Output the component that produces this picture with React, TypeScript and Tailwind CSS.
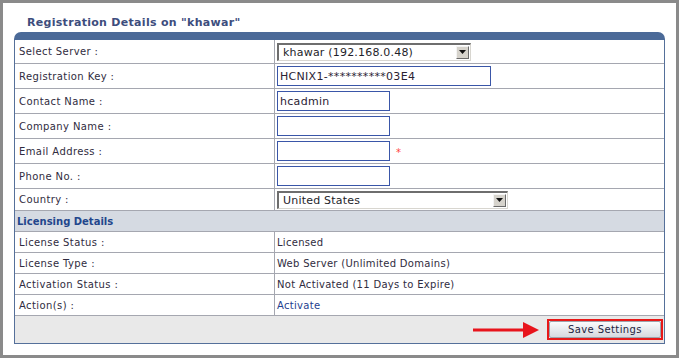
import React from "react";

const FONT = { fontFamily: '"DejaVu Sans", Verdana, sans-serif' };

type Row = { label: string; h: string; value: React.ReactNode };

function FakeSelect({ text, width }: { text: string; width: string }) {
  return (
    <div
      className={`flex h-[18px] items-center justify-between border-t-2 border-l-2 border-t-[#6e6e6e] border-l-[#6e6e6e] border-b border-r border-b-[#d8d6d0] border-r-[#d8d6d0] bg-white pl-[4px] pr-[1px] ${width}`}
    >
      <span className="text-[11px] leading-none tracking-[0.2px] text-[#1e1e2a]">{text}</span>
      <div className="flex h-[13px] w-[13px] items-center justify-center border border-t-[#f4f4f4] border-l-[#f4f4f4] border-b-[#6a6a6a] border-r-[#6a6a6a] bg-[#d6d3cc]">
        <svg width="7" height="4" viewBox="0 0 7 4">
          <path d="M0 0h7L3.5 4z" fill="#111" />
        </svg>
      </div>
    </div>
  );
}

function TextBox({ value, width }: { value?: string; width: string }) {
  return (
    <div className={`flex h-[20px] items-center border border-[#3a56a8] bg-white pl-[2px] ${width}`}>
      <span className="text-[11px] leading-none text-[#2a2233]">{value}</span>
    </div>
  );
}

const FORM_ROWS: Row[] = [
  { label: "Select Server :", h: "h-[24px]", value: <FakeSelect text="khawar (192.168.0.48)" width="w-[194px]" /> },
  { label: "Registration Key :", h: "h-[25px]", value: <TextBox value="HCNIX1-**********03E4" width="w-[214px]" /> },
  { label: "Contact Name :", h: "h-[25px]", value: <TextBox value="hcadmin" width="w-[113px]" /> },
  { label: "Company Name :", h: "h-[25px]", value: <TextBox width="w-[113px]" /> },
  {
    label: "Email Address :",
    h: "h-[25px]",
    value: (
      <div className="flex items-center">
        <TextBox width="w-[113px]" />
        <span className="ml-[6px] mt-[2px] text-[10px] text-[#ff4040]">*</span>
      </div>
    ),
  },
  { label: "Phone No. :", h: "h-[25px]", value: <TextBox width="w-[113px]" /> },
  { label: "Country :", h: "h-[22px]", value: <FakeSelect text="United States" width="w-[231px]" /> },
];

const LICENSE_ROWS: Row[] = [
  { label: "License Status :", h: "h-[21px]", value: "Licensed" },
  { label: "License Type :", h: "h-[21px]", value: "Web Server (Unlimited Domains)" },
  { label: "Activation Status :", h: "h-[21px]", value: "Not Activated (11 Days to Expire)" },
  { label: "Action(s) :", h: "h-[21px]", value: <span className="text-[#1f3f8f]">Activate</span> },
];

function TableRow({ row }: { row: Row }) {
  return (
    <div className={`flex border-b border-[#a5a7b0] ${row.h}`}>
      <div className="flex w-[260px] shrink-0 items-center border-r border-[#a5a7b0] pl-[4px] text-[10px] tracking-[0.4px] text-[#302c40]">
        {row.label}
      </div>
      <div className="flex items-center pl-[2px] text-[10px] tracking-[0.3px] text-[#302c40]">{row.value}</div>
    </div>
  );
}

export default function App() {
  return (
    <div className="h-[359px] w-[681px] bg-white" style={FONT}>
      <div className="h-[358px] w-[679px] border-[3px] border-[#8a8a8a] bg-white">
        {/* Title */}
        <div className="h-[29px] pl-[24px] pt-[13px] text-[11px] font-bold leading-[14px] tracking-[0.3px] text-[#3d4d7d]">
          Registration Details on "khawar"
        </div>

        {/* Panel */}
        <div className="ml-[11px] w-[651px]">
          <div className="h-[8px] rounded-t-[7px] bg-[#4b6a98]" />
          <div className="border-x border-b border-[#55709a]">
            {FORM_ROWS.map((r) => (
              <TableRow key={r.label} row={r} />
            ))}
            <div className="flex h-[21px] items-center border-b border-[#a5a7b0] bg-[#d5dae2] pl-[2px] text-[10px] font-bold text-[#22468c]">
              Licensing Details
            </div>
            {LICENSE_ROWS.map((r) => (
              <TableRow key={r.label} row={r} />
            ))}
            {/* Footer */}
            <div className="flex h-[27px] items-center justify-end bg-[#e9e9e9] pr-[1px]">
              <svg width="66" height="18" viewBox="0 0 66 18" className="mr-[8px]">
                <path d="M0 7.5h52v3H0z" fill="#e8141c" />
                <path d="M50 1l16 8-16 8z" fill="#e8141c" />
              </svg>
              <div className="border-2 border-[#e81818]">
                <button className="flex h-[17px] w-[112px] items-center justify-center rounded-[2px] border border-[#9ea3ac] bg-gradient-to-b from-[#fbfbfc] to-[#d6d9df] text-[10px] tracking-[0.4px] text-[#1e2440]">
                  Save Settings
                </button>
              </div>
            </div>
          </div>
        </div>
      </div>
    </div>
  );
}
